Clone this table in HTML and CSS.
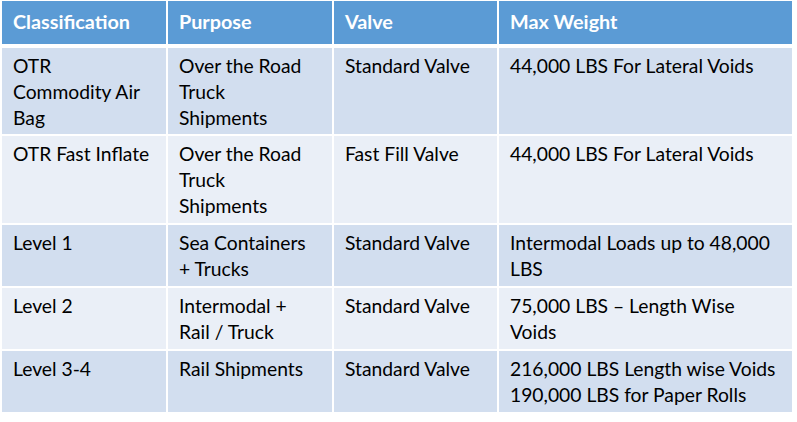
FILE: index.html
```html
<!DOCTYPE html>
<html lang="en">
<head>
<meta charset="utf-8">
<title>Air Bag Classification</title>
<link rel="stylesheet" href="styles.css">
</head>
<body>
<div class="table">
  <div class="row head">
    <div class="cell">Classification</div>
    <div class="cell">Purpose</div>
    <div class="cell">Valve</div>
    <div class="cell">Max Weight</div>
  </div>
  <div class="row odd tall">
    <div class="cell">OTR<br>Commodity Air<br>Bag</div>
    <div class="cell">Over the Road<br>Truck<br>Shipments</div>
    <div class="cell">Standard Valve</div>
    <div class="cell">44,000 LBS For Lateral Voids</div>
  </div>
  <div class="row even tall">
    <div class="cell">OTR Fast Inflate</div>
    <div class="cell">Over the Road<br>Truck<br>Shipments</div>
    <div class="cell">Fast Fill Valve</div>
    <div class="cell">44,000 LBS For Lateral Voids</div>
  </div>
  <div class="row odd">
    <div class="cell">Level 1</div>
    <div class="cell">Sea Containers<br>+ Trucks</div>
    <div class="cell">Standard Valve</div>
    <div class="cell">Intermodal Loads up to 48,000<br>LBS</div>
  </div>
  <div class="row even">
    <div class="cell">Level 2</div>
    <div class="cell">Intermodal +<br>Rail / Truck</div>
    <div class="cell">Standard Valve</div>
    <div class="cell">75,000 LBS – Length Wise<br>Voids</div>
  </div>
  <div class="row odd">
    <div class="cell">Level 3-4</div>
    <div class="cell">Rail Shipments</div>
    <div class="cell">Standard Valve</div>
    <div class="cell">216,000 LBS Length wise Voids<br>190,000 LBS for Paper Rolls</div>
  </div>
</div>
</body>
</html>
```
FILE: styles.css
```css
html, body {
  margin: 0;
  background: #ffffff;
}
body {
  padding: 1px 5px 0 2px;
  font-family: Lato, "Open Sans", sans-serif;
  font-size: 19.3px;
  line-height: 26px;
  color: #000000;
}
.table {
  display: flex;
  flex-direction: column;
  gap: 2px;
  width: 790px;
}
.row {
  display: grid;
  grid-template-columns: 164px 164px 163px 293px;
  column-gap: 2px;
  height: 61px;
}
.row.tall {
  height: 86px;
}
.row.even.tall {
  height: 87px;
}
.row.head {
  height: 43px;
  margin-bottom: 2px;
}
.cell {
  padding: 5px 8px 0 11px;
  white-space: nowrap;
}
.head .cell {
  background: #5b9bd5;
  color: #ffffff;
  font-weight: bold;
  font-size: 19.8px;
  padding-top: 7px;
}
.odd .cell {
  background: #d2deef;
}
.even .cell {
  background: #eaeff7;
}
```
